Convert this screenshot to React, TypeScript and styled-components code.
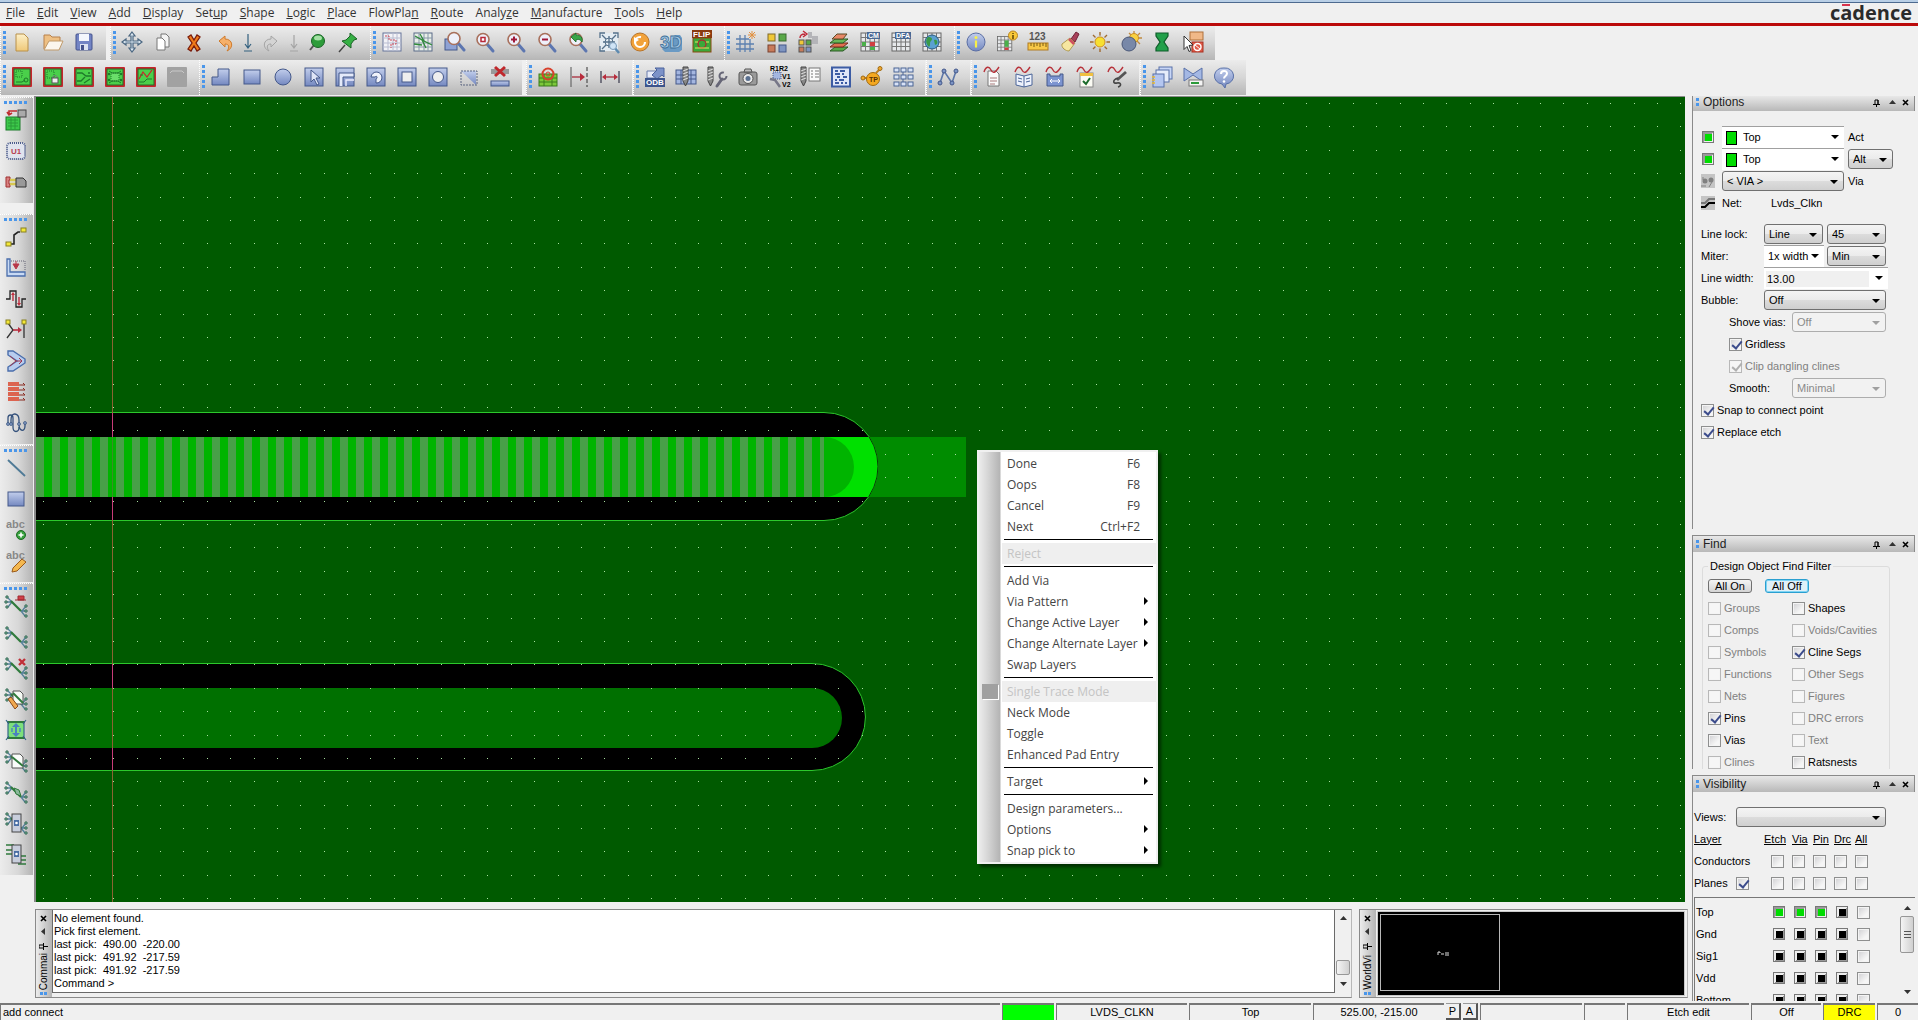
import React from 'react';
import styled, { createGlobalStyle, css } from 'styled-components';

const UI = '"Liberation Sans", Arial, sans-serif';
const SEGOE = '"Open Sans", "Noto Sans", sans-serif';

const Global = createGlobalStyle`
  * { box-sizing: border-box; }
  html, body { margin: 0; height: 100%; overflow: hidden; background: #f0f0f0; }
  body { font: 11px/13px ${UI}; color: #000; }
  button, input, select, textarea { font: inherit; color: inherit; margin: 0; padding: 0; border: 0; background: none; }
`;

/* ---------- icons ---------- */

const NAVY = '#44588a';
const TRACK = '#1e7a2a';

const Mag = ({ children }: { children?: React.ReactNode }) => (
  <>
    <path d="M14 14l6 7" stroke="#5c76b0" strokeWidth="3" strokeLinecap="round" />
    <circle cx="10" cy="9.500" r="6" fill="#eef0fa" stroke="#a8705c" strokeWidth="1.600" />
    {children}
  </>
);
const Board = ({ children }: { children?: React.ReactNode }) => (
  <>
    <rect x="2" y="2" width="20" height="20" rx="1" fill="#c8242c" />
    <rect x="4" y="4" width="16" height="16" fill="#4ad04a" stroke="#2a6a2c" />
    {children}
  </>
);
const BlueSquare = ({ children }: { children?: React.ReactNode }) => (
  <>
    <rect x="3" y="3" width="18" height="18" fill="url(#steel)" stroke={NAVY} />
    {children}
  </>
);
const Table = ({ children }: { children?: React.ReactNode }) => (
  <>
    <rect x="3" y="3" width="18" height="18" fill="#e6e8ea" stroke="#666" />
    <path d="M3 7.500h18M3 12h18M3 16.500h18M7.500 3v18M12 3v18M16.500 3v18" stroke="#777" />
    {children}
  </>
);
const Wave = ({ children }: { children?: React.ReactNode }) => (
  <>
    {children}
    <path d="M3 7c2-6 5-6 7-2s4 3 8-3" fill="none" stroke="#b8323a" strokeWidth="1.400" />
  </>
);
const Page = () => <path d="M7 6h8l3 3v12H7z" fill="#fafafa" stroke="#777" />;
const Drill = ({ x = 5 }: { x?: number }) => (
  <g>
    <path d={`M${x} 2h5v14l-2.500 5l-2.500-5z`} fill="#888" stroke="#444" />
    <path d={`M${x} 6l5-2M${x} 9l5-2M${x} 12l5-2M${x} 15l5-2`} stroke="#ddd" />
  </g>
);
const Wrench = () => (
  <path d="M12 21l5-7" stroke="#667" strokeWidth="3" strokeLinecap="round" />
);
const Rats = ({ children }: { children?: React.ReactNode }) => (
  <>
    <path d="M3 3l5 5M2 8h6M4 13l4-5M22 12l-4 5M22 17h-5M21 22l-4-5" stroke="#55809a" strokeWidth="1.300" fill="none" />
    <path d="M7 7l10 10" stroke="#2f7a3c" strokeWidth="2.200" />
    {[[3, 3], [2, 8], [3, 13], [22, 12], [22, 17], [22, 22]].map(([x, y]) => (
      <circle key={`${x}-${y}`} cx={x} cy={y} r="1.300" fill="#6aa88a" stroke="#2a5a4a" strokeWidth="0.700" />
    ))}
    {children}
  </>
);
const IconText = styled.text`
  font-family: ${UI};
  font-weight: 700;
`;

const icons: Record<string, React.ReactNode> = {
  new: <path d="M6 4h8l4 4v13H6z" fill="url(#sand)" stroke="#b8904a" />,
  open: <><path d="M3 19V5h6l2 2h8v4" fill="#eec084" stroke="#b8804a" /><path d="M3 20l5-9h14l-4 9z" fill="#fbf6ee" stroke="#c09a6a" /></>,
  save: <><rect x="4" y="4" width="16" height="16" rx="1" fill="#7384c4" stroke="#45528c" /><rect x="7" y="4" width="10" height="7" fill="#f4f6fc" /><rect x="8" y="14" width="8" height="6" fill="#dde2f0" /><rect x="9" y="15" width="3" height="5" fill="#45528c" /></>,
  move: <path d="M12 2l3 4h-2v5h5V9l4 3-4 3v-2h-5v5h2l-3 4-3-4h2v-5H6v2l-4-3 4-3v2h5V6H9z" fill="#dce8f2" stroke="#4a6680" strokeWidth="1.200" />,
  copy: <><path d="M10 4h5l3 3v10h-8z" fill="#f4f4f4" stroke="#777" /><path d="M6 8h5l3 3v9H6z" fill="#fff" stroke="#777" /></>,
  del: <path d="M6 7l3-2 3 5 3-5 3 2-4 6 4 6-3 2-3-5-3 5-3-2 4-6z" fill="#f07a1a" stroke="#7a1c0c" strokeWidth="1.300" />,
  undo: <path d="M6 11l6-5v3c8 0 9 9 2 12 3-4 2-7-2-7v3z" fill="#f6b06a" stroke="#d07a2a" />,
  down: <path d="M12 4v14M9 14l3 4 3-4M8 21h8" fill="none" stroke="#33607f" strokeWidth="1.200" />,
  redo: <path d="M18 11l-6-5v3c-8 0-9 9-2 12-3-4-2-7 2-7v3z" fill="#d4d4d4" stroke="#a4a4a4" />,
  downOff: <path d="M12 5v13M9 14l3 4 3-4M8 21h8" fill="none" stroke="#a4a4a4" strokeWidth="1.200" />,
  ball: <><path d="M9 15l-4 5" stroke="#555" strokeWidth="2" /><circle cx="13" cy="11" r="6.500" fill="#2d9c3a" stroke="#1a6426" /><ellipse cx="13" cy="8" rx="4" ry="2.500" fill="#a4e0a4" /></>,
  pin: <><path d="M9 15l-6 7" stroke="#444" strokeWidth="1.400" /><path d="M14 3l7 6-3 1-3 4v4L6 11l4-1 4-4z" fill="#36b044" stroke="#1a6426" /></>,
  gridRed: <><rect x="3" y="3" width="18" height="18" fill="#f2f2f6" stroke="#66759a" /><path d="M8 3v18M13 3v18M17 3v18M3 8h18M3 13h18M3 17h18" stroke="#b8bcd0" /><path d="M5 6h4v4h7v4h-5v4" fill="none" stroke="#c84858" strokeDasharray="2 1" /></>,
  gridGreen: <><rect x="3" y="3" width="18" height="18" fill="#e8eee8" stroke="#5a6a88" /><path d="M8 3v18M13 3v18M17 3v18M3 8h18M3 13h18M3 17h18" stroke="#8898a8" /><path d="M4 6l7 4 4 8M9 4l4 7 8 4M3 14l8 1" fill="none" stroke="#2f8a3a" strokeWidth="1.300" /></>,
  magWin: <><rect x="3" y="9" width="12" height="11" fill="#8fa2d4" stroke={NAVY} /><g transform="translate(2 -1)"><Mag /></g></>,
  magFit: <Mag><rect x="8" y="7.500" width="4" height="4" fill="#fff" stroke="#b82838" strokeWidth="1.500" /></Mag>,
  magIn: <Mag><path d="M7 9.500h6M10 6.500v6" stroke="#a01838" strokeWidth="2" /></Mag>,
  magOut: <Mag><path d="M7 9.500h6" stroke="#a01838" strokeWidth="2" /></Mag>,
  magPrev: <Mag><path d="M5 7l5-4v2c5 0 7 3 6 7-2-3-4-3-6-2v2z" fill="#3aa648" stroke="#1a6426" strokeWidth="0.800" /></Mag>,
  magSel: <><path d="M3 3h18v18H3z" fill="#e4ecf2" /><path d="M3 8V3h5M16 3h5v5M3 16v5h5M5 5l4 4M19 5l-4 4M5 19l4-4M12 6v12M6 12h12" stroke="#54708a" strokeWidth="1.300" fill="none" /><circle cx="12" cy="12" r="4" fill="none" stroke="#54708a" /><path d="M17 17l5 6" stroke="#5c8ab0" strokeWidth="2.500" /><circle cx="16" cy="16" r="3.500" fill="#cfe4f6" stroke="#7a9ab8" /></>,
  refresh: <><circle cx="12" cy="12" r="9" fill="#f2a23a" stroke="#b8742a" /><circle cx="12" cy="12" r="5" fill="none" stroke="#fff" strokeWidth="2.200" strokeDasharray="24 7" /><path d="M6 13V7l5 3z" fill="#fff" /></>,
  three: <><path d="M16 5h5l2 3v12l-3 2-14 0-3-3z" fill="#6a9ac4" /><IconText x="1" y="18" fontSize="17" fill="#a4c8e6" stroke="#3f7098" strokeWidth="0.800">3D</IconText></>,
  flip: <><rect x="3" y="8" width="18" height="14" fill="#3aa83a" stroke="#8a4a12" /><circle cx="12" cy="14" r="4" fill="none" stroke="#a83030" strokeWidth="1.400" /><path d="M5 18h14M5 12h3M16 12h3" stroke="#e0e860" /><rect x="2" y="0" width="20" height="8" fill="#8a3a10" /><IconText x="3" y="7" fontSize="8" fill="#fff">FLIP</IconText></>,
  gridStar: <><path d="M6 5v17M11 5v17M16 9v13M2 9h13M2 14h18M2 19h18" stroke="#5c80b0" strokeWidth="1.300" /><path d="M18 1v8M14 5h8M15 2l6 6M21 2l-6 6" stroke="#e09040" /></>,
  four: <><rect x="3" y="4" width="7" height="7" fill="#f0c838" stroke="#806a2a" /><rect x="14" y="4" width="7" height="7" fill="#5aa848" stroke="#3a6a30" /><rect x="3" y="15" width="7" height="7" fill="#c87a5a" stroke="#7a4230" /><rect x="14" y="15" width="7" height="7" fill="#7e94c0" stroke={NAVY} /></>,
  fourMove: <><path d="M12 2h4v4h6v8h-6V8h-4z" fill="#b4b4b8" /><rect x="3" y="10" width="5" height="5" fill="#f0c838" stroke="#555" /><rect x="10" y="10" width="5" height="5" fill="#5aa848" stroke="#555" /><rect x="3" y="17" width="5" height="5" fill="#c87a5a" stroke="#555" /><rect x="10" y="17" width="5" height="5" fill="#7e94c0" stroke="#555" /><path d="M4 8c0-3 2-4 5-4M7 1l4 3-4 3" fill="none" stroke="#c02838" strokeWidth="1.400" /></>,
  layers: <><path d="M3 21l5-4h13l-5 4z" fill="#58a848" stroke="#2a5a24" /><path d="M3 17l5-4h13l-5 4z" fill="#e07050" stroke="#7a2a1c" /><path d="M3 13l5-4h13l-5 4z" fill="#68b858" stroke="#2a5a24" /><path d="M5 9l5-5h10l-4 5z" fill="#e88868" stroke="#5a4a24" /></>,
  cm: <Table><rect x="9" y="2" width="13" height="7" fill="#4a6894" /><IconText x="10" y="8" fontSize="7" fill="#fff">CM</IconText><rect x="4" y="12" width="4" height="4" fill="#4ab04a" /><rect x="12" y="12" width="5" height="4" fill="#d04040" /><rect x="12" y="17" width="5" height="3" fill="#4ab04a" /></Table>,
  dfa: <Table><rect x="6" y="2" width="16" height="7" fill="#4a6894" /><IconText x="7" y="8" fontSize="7" fill="#fff">DFA</IconText></Table>,
  globe: <Table><circle cx="12" cy="12" r="7" fill="#5aa0d0" stroke="#2a5a80" /><path d="M8 7c4 0 5 2 3 4s0 4-2 6c-3-3-4-7-1-10zM14 10c3-1 4 2 3 4l-2 1z" fill="#3a9a48" /></Table>,
  info: <><circle cx="12" cy="12" r="9" fill="url(#steel)" stroke="#5a6ea4" /><circle cx="12" cy="7.500" r="1.500" fill="#f8f048" /><path d="M12 10.500v7" stroke="#f8f048" strokeWidth="2.200" /></>,
  tableInfo: <><g transform="translate(0 4) scale(0.800)"><Table><rect x="12" y="8" width="5" height="8" fill="#4ab04a" /><rect x="12" y="17" width="5" height="3" fill="#d04040" /></Table></g><circle cx="18" cy="5.500" r="4.500" fill="#f8c838" stroke="#b88420" /><path d="M18 3v1M18 5v4" stroke="#553a00" strokeWidth="1.400" /></>,
  ruler: <><IconText x="3" y="10" fontSize="10" fill="#555">123</IconText><rect x="2" y="13" width="20" height="7" fill="#f8c848" stroke="#b07a20" /><path d="M5 13v3M8 13v4M11 13v3M14 13v4M17 13v3M20 13v4" stroke="#7a5a10" /></>,
  brush: <><path d="M14 9l5-7 3 2-4 8z" fill="#a8405a" stroke="#702438" /><path d="M5 14l8-6 5 5-6 8c-3 0-8-3-7-7z" fill="#f6e6a0" stroke="#b09a50" /><path d="M12 9l5 5" stroke="#d05060" strokeWidth="2.500" /></>,
  sun: <><path d="M12 2v20M2 12h20M5 5l14 14M19 5L5 19" stroke="#a06a30" strokeWidth="1.400" /><circle cx="12" cy="12" r="6.500" fill="#d8d8d8" /><circle cx="12" cy="12" r="5" fill="#f8e030" stroke="#d09020" /></>,
  moon: <><path d="M15 1v14M8 8h15M10 3l11 11M21 3l-8 8" stroke="#c08a40" strokeWidth="1.300" /><circle cx="15" cy="8" r="4.500" fill="#f8d040" stroke="#d09020" /><circle cx="10" cy="14" r="7" fill="#7888a8" stroke="#4a5878" /></>,
  glass: <path d="M6 3h12v3l-4 6 4 6v3H6v-3l4-6-4-6z" fill="#22a04a" stroke="#0f5c2a" strokeWidth="1.200" />,
  noPick: <><rect x="9" y="2" width="13" height="8" fill="#f0b888" stroke="#b0703a" /><rect x="11" y="12" width="11" height="10" fill="#e05a48" stroke="#a83020" /><circle cx="16.500" cy="17" r="3.500" fill="none" stroke="#fff" strokeWidth="1.400" /><path d="M14 15l5 4" stroke="#fff" /><path d="M3 6l9 9-4 .5 2 5-2 1-2-5-3 3z" fill="#fff" stroke="#333" /></>,

  b1: <Board><rect x="6" y="6" width="6" height="6" fill="none" stroke={TRACK} strokeDasharray="1 1" /><path d="M6 17h6l3-2" stroke={TRACK} fill="none" /><circle cx="16" cy="15" r="2" fill="none" stroke={TRACK} /></Board>,
  b2: <Board><rect x="6" y="6" width="7" height="7" fill="none" stroke={TRACK} strokeDasharray="1 1" /><path d="M12 13v-1c0-2 4-2 4 0v1" fill="none" stroke="#777" /><rect x="11" y="13" width="6" height="5" fill="#f0f0f0" stroke="#555" /></Board>,
  b3: <Board><path d="M5 8h5l4 3h5M5 16h4l4-4M12 18l6-4" stroke={TRACK} strokeWidth="1.300" fill="none" /><circle cx="17" cy="8" r="1" fill={TRACK} /></Board>,
  b4: <Board><path d="M8 8h8v8H8z" fill="#6ade6a" stroke={TRACK} strokeDasharray="1 1" /><path d="M6 6l3 2h6l3-2M6 18l3-2h6l3 2" stroke={TRACK} fill="none" />{[[6, 9], [18, 9], [6, 15], [18, 15]].map(([x, y]) => <circle key={`${x}${y}`} cx={x} cy={y} r="1.200" fill={TRACK} />)}</Board>,
  b5: <Board><path d="M5 14l4-7 4 5 5-7" stroke="#c8242c" strokeWidth="1.200" fill="none" /><path d="M5 17h5l3-3h5M6 10h3" stroke={TRACK} fill="none" /></Board>,
  b6: <><rect x="2" y="2" width="20" height="20" rx="1" fill="#a2a2a2" /><path d="M5 8l2-2h10l2 2" stroke="#c8c8c8" fill="none" /></>,
  poly: <path d="M3 12h6V4h11v16H3z" fill="url(#steel)" stroke={NAVY} />,
  rect: <rect x="4" y="5" width="16" height="14" fill="url(#steel)" stroke={NAVY} />,
  oval: <circle cx="12" cy="12" r="8" fill="url(#steel)" stroke={NAVY} />,
  pick: <BlueSquare><path d="M9 5v12l3-3 3 6 2-1-3-6h4z" fill="#dfe5f6" stroke={NAVY} /></BlueSquare>,
  nest: <BlueSquare><path d="M6 21V8h15v4H10v9" fill="#e4eafa" stroke={NAVY} /><path d="M13 21v-6h8" fill="none" stroke="#eef" strokeWidth="1.400" /></BlueSquare>,
  pie: <BlueSquare><path d="M7 12a5.500 5.500 0 1 1 5 6v-4c2-1 1-4-1-2z" fill="#f0f2fa" stroke={NAVY} /></BlueSquare>,
  hollow: <BlueSquare><rect x="7" y="7" width="10" height="10" fill="#eee" stroke={NAVY} /></BlueSquare>,
  circ: <BlueSquare><circle cx="12" cy="12" r="5.500" fill="#eee" stroke={NAVY} /></BlueSquare>,
  diag: <><path d="M4 6l15 14V6z" fill="url(#steel)" /><path d="M4 6h16v14H4z" fill="none" stroke="#5a6480" strokeDasharray="2 1" /></>,
  delShape: <><rect x="3" y="4" width="18" height="5" fill="#999" /><path d="M7 2l10 9M17 2L7 11" stroke="#c0282c" strokeWidth="3" /><rect x="3" y="16" width="18" height="5" fill="url(#steel)" stroke={NAVY} /></>,
  icRing: <><rect x="3" y="9" width="18" height="12" fill="#7cc83a" stroke="#3a7a1c" /><path d="M3 13h18M3 17h18M8 9v12M16 9v12" stroke="#3a7a1c" /><circle cx="12" cy="9" r="5.500" fill="none" stroke="#d8402c" strokeWidth="2" /><circle cx="12" cy="9" r="2" fill="none" stroke="#d8402c" /></>,
  dimTo: <><path d="M4 2v20" stroke="#555" /><path d="M20 2v20" stroke="#333" strokeDasharray="4 2" /><path d="M5 12h10" stroke="#a82c3c" strokeWidth="1.300" /><path d="M13 8l5 4-5 4z" fill="#b82c3c" /></>,
  dim: <><path d="M3 6v12M21 6v12" stroke="#445" strokeWidth="1.300" /><path d="M6 12h12" stroke="#a82c3c" strokeWidth="1.300" /><path d="M4 12l4-3v6zM20 12l-4-3v6z" fill="#b82c3c" /></>,
  odb: <><path d="M4 6h10v7H4z" fill="#e8ecf8" stroke="#6a7cac" /><path d="M9 10l5-5-2-2h9v9l-2-2-5 4z" fill="#7c92c8" stroke="#4a629c" /><rect x="2" y="13" width="20" height="9" fill="#3c548c" /><IconText x="3" y="20" fontSize="8" fill="#fff">ODB</IconText></>,
  drillTable: <><rect x="2" y="5" width="20" height="14" fill="#a4b6e0" stroke={NAVY} /><path d="M2 10h20M2 14h20M7 5v14M17 5v14" stroke={NAVY} /><Drill x={9} /></>,
  drillWrench: <><Drill x={3} /><Wrench /><circle cx="18" cy="11" r="3.500" fill="none" stroke="#667" strokeWidth="2" strokeDasharray="17 5" /></>,
  camera: <><rect x="3" y="7" width="18" height="13" rx="2" fill="#9a9a9a" stroke="#555" /><path d="M8 7l1-3h6l1 3z" fill="#bbb" stroke="#555" /><circle cx="12" cy="13.500" r="5" fill="#e8e8e8" stroke="#555" /><circle cx="12" cy="13.500" r="2.500" fill="#5a7090" /></>,
  r1r2: <><IconText x="3" y="6" fontSize="7">R1R2</IconText><IconText x="15" y="14" fontSize="7">V1</IconText><IconText x="15" y="22" fontSize="7">V2</IconText><rect x="6" y="7" width="8" height="7" fill="#a4b6e0" stroke={NAVY} strokeDasharray="1 1" /><path d="M3 14l5 1 5 7" stroke="#778" strokeWidth="2.500" fill="none" /></>,
  drillList: <><Drill x={3} /><rect x="11" y="3" width="11" height="13" fill="#fafafa" stroke="#777" /><path d="M13 6h2M17 6h4M13 9h2M17 9h4M13 12h2M17 12h4" stroke="#777" /></>,
  matrix: <><rect x="3" y="2.500" width="18" height="19" fill="#dfe6f8" stroke="#3c5ca4" strokeWidth="2" /><path d="M6 6h3M11 6h5M6 9h5M13 9h2M8 12h3M14 12h4M6 15h2M10 15h5M6 18h4M12 18h2M16 18h2" stroke="#3c5ca4" strokeWidth="2" /></>,
  tp: <><path d="M2 13h6M16 8l4-4" stroke="#c08020" strokeWidth="2" /><circle cx="3" cy="13" r="2" fill="#f0a830" stroke="#a06a10" /><circle cx="20" cy="3.500" r="2" fill="#f0a830" stroke="#a06a10" /><circle cx="13" cy="14" r="6.500" fill="#f4a820" stroke="#a06a10" /><IconText x="9" y="17" fontSize="7" fill="#5a3000">TP</IconText></>,
  nine: <>{[3, 10, 17].map(y => [3, 10, 17].map(x => <rect key={`${x}${y}`} x={x} y={y} width="5" height="4" fill="#d8e2f6" stroke="#4a6494" />))}<path d="M12 7v3M12 14v3" stroke="#4a6494" /></>,
  net: <><path d="M4 18L8 6l8 12 4-12" fill="none" stroke="#5c76a8" strokeWidth="1.600" />{[[4, 18], [8, 6], [16, 18], [20, 6]].map(([x, y]) => <circle key={x} cx={x} cy={y} r="2" fill="#7c94c4" stroke={NAVY} />)}</>,
  w1: <Wave><Page /><path d="M9 13h7M9 16h7M9 19h5" stroke="#a87a7a" /></Wave>,
  w2: <Wave><path d="M4 9l8 2 8-2v11l-8 2-8-2z" fill="#eef2fc" stroke="#4a6498" /><path d="M12 11v11M6 13l4 1M6 16l4 1M18 13l-4 1M18 16l-4 1" stroke="#4a6498" /></Wave>,
  w3: <Wave><path d="M4 9h3v2h10V9h3v12H4z" fill="#7c94d0" stroke={NAVY} /><path d="M7 16h10M9 14l-2 2 2 2M15 14l2 2-2 2" stroke="#fff" fill="none" /></Wave>,
  w4: <Wave><rect x="6" y="8" width="13" height="14" fill="#fbfbf4" stroke="#888" /><rect x="6" y="8" width="13" height="3" fill="#f0c040" /><path d="M9 16l3 3 4-6" fill="none" stroke="#1a6a2a" strokeWidth="2" /></Wave>,
  w5: <Wave><path d="M21 7l-9 8" fill="none" stroke="#555" strokeWidth="2.800" /><path d="M13 13c-6 2-5 6-1 5s5 3 1 4" fill="none" stroke="#444" strokeWidth="1.600" /></Wave>,
  windows: <><rect x="9" y="2" width="13" height="12" fill="#c8d6f6" stroke="#5870a8" /><rect x="6" y="5" width="13" height="12" fill="#e6ecfa" stroke="#5870a8" /><rect x="3" y="9" width="11" height="13" fill="#b4c6f0" stroke="#5870a8" /><path d="M2 12h3M2 15h3M2 18h3" stroke="#e8b830" strokeWidth="1.600" /></>,
  bow: <><path d="M3 3l9 6 9-6v13l-9-6-9 6z" fill="#a4b8e4" stroke="#5870a8" /><rect x="8" y="15" width="14" height="6" fill="#f4f4f4" stroke="#777" /><path d="M10 18h8" stroke="#2a9a3a" strokeWidth="2" /></>,
  help: <><path d="M12 3a8.500 8 0 0 1 2 16l-1 4-3-4A8.500 8 0 0 1 12 3z" fill="url(#steel)" stroke="#5870a8" /><path d="M9 9c0-4 6-4 6-.5 0 2.500-3 2.500-3 5" fill="none" stroke="#fff" strokeWidth="2" /><circle cx="12" cy="16.500" r="1.300" fill="#fff" /></>,

  place: <><rect x="2" y="9" width="14" height="13" fill="#3cc84a" stroke="#1a7a28" /><path d="M4 12h10M4 15h10M4 18h10M7 10v11M11 10v11" stroke="#2a9a38" /><rect x="14" y="2" width="8" height="7" fill="#aaa" stroke="#444" /><path d="M13 3H5v4M3 4l2 3 3-2" stroke="#c02c30" strokeWidth="1.600" fill="none" /></>,
  u1: <><rect x="3" y="4" width="18" height="16" rx="3" fill="#e0e4ee" stroke="#4c5c8c" strokeWidth="2" strokeDasharray="1 1" /><IconText x="7" y="15" fontSize="8" fill="#b84050">U1</IconText></>,
  conn: <><path d="M2 7h4v3H5v4h1v3H2z" fill="#d88080" stroke="#a03030" /><path d="M6 10h7M6 14h7" stroke="#d8c850" strokeWidth="2.400" /><path d="M12 8h7l3 3v6H12z" fill="#999" stroke="#333" /></>,
  route: <><path d="M5 19h5v-9l4-3h2" fill="none" stroke="#222" strokeWidth="1.600" /><rect x="2" y="17" width="5" height="4" fill="#f4e838" stroke="#888020" /><rect x="17" y="3" width="5" height="4" fill="#f4e838" stroke="#888020" /></>,
  slide: <><path d="M3 3h3v13h15v4H3z" fill="#c8daf4" stroke="#4a6eac" strokeWidth="1.300" /><path d="M7 5h14v9" fill="none" stroke="#667" strokeDasharray="1 1" /><path d="M12 5v4M9 8h6l-3 5z" fill="#b83848" stroke="#b83848" /></>,
  tune: <><path d="M2 12h4V4h6v16h6v-8h4" fill="none" stroke="#222" strokeWidth="1.300" /><path d="M9 14V8M15 10v6" stroke="#c03040" strokeWidth="1.400" /><path d="M7 8l2-3 2 3zM13 16l2 3 2-3z" fill="#c03040" /></>,
  vertex: <><path d="M4 5l5 7-6 8M20 5v15" stroke="#333" strokeWidth="1.300" fill="none" /><path d="M9 12h6" stroke="#b83040" strokeWidth="1.600" /><path d="M14 9l4 3-4 3z" fill="#b83040" /><rect x="2" y="2" width="4" height="4" fill="#f4e838" stroke="#888020" /><rect x="18" y="2" width="4" height="4" fill="#f4e838" stroke="#888020" /></>,
  smooth: <><path d="M4 2h5l12 8v4l-12 8H4v-4l9-6-9-6z" fill="#b8ccee" stroke="#4a6eac" strokeWidth="1.400" /><path d="M6 7l6 5-6 5M12 12h6M15 9l3 3-3 3" stroke="#a03850" fill="none" /></>,
  fan: <><path d="M4 4h11M4 9h11M4 14h11M4 19h11" stroke="#dc6450" strokeWidth="4" /><path d="M15 5h6M15 10h6M15 15h6M15 20h6M19 3l2 2M19 8l2 2M19 13l2 2M19 18l2 2" stroke="#8a2a20" /></>,
  meander: <><path d="M4 13V7c0-4 5-4 5 0v9c0 6 6 6 6 0" fill="none" stroke="#35527c" strokeWidth="1.300" /><path d="M7 13V9c0-9 8-7 8 0v4c0 8 6 8 6 2v-4" fill="none" stroke="#35527c" strokeWidth="1.300" />{[[4, 13], [7, 13], [15, 13], [21, 12]].map(([x, y]) => <circle key={x} cx={x} cy={y} r="1.500" fill="#8098c0" stroke="#35527c" strokeWidth="0.700" />)}</>,
  line: <path d="M4 4l17 16" stroke="#4f7a96" strokeWidth="1.800" />,
  abcAdd: <><IconText x="2" y="10" fontSize="11" fill="#888">abc</IconText><circle cx="17" cy="17" r="4.500" fill="#36a03c" stroke="#1c6a24" /><path d="M14.500 17h5M17 14.500v5" stroke="#fff" strokeWidth="1.600" /></>,
  abcEdit: <><IconText x="2" y="10" fontSize="11" fill="#888">abc</IconText><path d="M9 19l9-9 4 3-9 9-5 1z" fill="#f4b850" stroke="#9a5a1a" /></>,
  rats1: <Rats><path d="M11 6h11M14 2h6v4h-6z" stroke="#a02830" fill="#d04048" /></Rats>,
  rats2: <Rats />,
  rats3: <Rats><path d="M15 3l6 6M21 3l-6 6" stroke="#c03038" strokeWidth="2.400" /></Rats>,
  rats4: <Rats><path d="M9 4h7l3 3v10h-10z" fill="#f6faf4" stroke="#555" /><path d="M9 6l10 10" stroke="#2f7a3c" strokeWidth="2" /><path d="M4 12l3-2 7 9-3 3z" fill="#f0a850" stroke="#8a4a1a" /></Rats>,
  rats5: <><rect x="4" y="4" width="16" height="16" fill="#7ce07c" /><path d="M3 4h18M3 20h18" stroke="#2f7a3c" strokeWidth="2" /><path d="M2 2l3 4M22 2l-3 4M2 22l3-4M22 22l-3-4M4 5v14M20 5v14" stroke="#35648a" strokeWidth="1.200" /><path d="M12 5l4 4H8zM12 19l4-4H8z" fill="#4a80c0" /><path d="M12 8v8" stroke="#4a80c0" strokeWidth="2" /><path d="M8 10v4M16 10v4" stroke="#4a80c0" strokeWidth="1.400" /></>,
  rats6: <Rats><path d="M8 5h8l3 3v11H8z" fill="#fafcfa" stroke="#555" /><path d="M8 8l11 9" stroke="#2f7a3c" strokeWidth="2" /></Rats>,
  rats7: <Rats><path d="M10 8l5 2 2 6-5-2z" fill="#8ab89a" stroke="#2f7a3c" /></Rats>,
  rats8: <Rats><rect x="8" y="3" width="9" height="18" fill="#c8cedc" stroke="#444" /><rect x="10" y="9" width="5" height="6" fill="#4a6ea4" /><circle cx="12.500" cy="12" r="1.300" fill="#fff" /></Rats>,
  rats9: <><path d="M2 3h8M2 8h8M2 12h6M14 14h8M14 18h8M14 22h8" stroke="#2f7a3c" strokeWidth="1.400" /><rect x="8" y="3" width="9" height="18" fill="#c8cedc" stroke="#444" /><rect x="10" y="9" width="5" height="6" fill="#4a6ea4" /><circle cx="12.500" cy="12" r="1.300" fill="#fff" /></>,
};

/* ---------- frame ---------- */

const Shell = styled.div`
  height: 100vh;
  display: flex;
  flex-direction: column;
  background: #f0f0f0;
`;
const TitleEdge = styled.div`
  height: 3px;
  flex: none;
  background: #b9cfe6;
  border-bottom: 1px solid #4d6a8f;
`;
const MenuBar = styled.nav`
  height: 23px;
  flex: none;
  display: flex;
  align-items: center;
  padding: 0 6px;
  gap: 12px;
  border-bottom: 3px solid #bb0a0a;
  font: 12px/16px ${SEGOE};
  color: #333;
`;
const MenuItem = styled.button`
  white-space: nowrap;
`;
const Brand = styled.div`
  position: relative;
  margin-left: auto;
  font: 700 20px/20px ${SEGOE};
  color: #2b2b2b;
  &::after {
    content: '';
    position: absolute;
    left: 12px;
    top: 1px;
    width: 8px;
    height: 2px;
    background: #d8344c;
  }
`;
const HiddenDefs = styled.svg`
  position: absolute;
  width: 0;
  height: 0;
`;

const ToolRow = styled.div<{ $h: number }>`
  height: ${p => p.$h}px;
  flex: none;
  display: flex;
`;
const ToolGroup = styled.div<{ $vertical?: boolean; $gap?: number }>`
  display: flex;
  flex: none;
  align-items: center;
  ${p => p.$vertical ? css`
    flex-direction: column;
    width: 33px;
    padding: 3px 2px 6px 0;
    margin-bottom: ${p.$gap ?? 0}px;
    border-top: 1px dotted #fff;
    background: linear-gradient(90deg, #ececec, #d8d8d8 55%, #b4b4b4);
  ` : css`
    padding: 0 7px 2px 2px;
    margin-right: ${p.$gap ?? 0}px;
    border-left: 1px dotted #fff;
    background: linear-gradient(#ececec, #d6d6d6 50%, #b6b6b6);
  `}
`;
const Grip = styled.span<{ $vertical?: boolean }>`
  flex: none;
  width: ${p => (p.$vertical ? 23 : 3)}px;
  height: ${p => (p.$vertical ? 3 : 23)}px;
  background: repeating-linear-gradient(${p => (p.$vertical ? '90deg' : '180deg')}, #4a96ea 0 3px, transparent 3px 5px);
`;
const ToolButton = styled.button<{ $narrow?: boolean }>`
  width: ${p => (p.$narrow ? 15 : 31)}px;
  height: 31px;
  flex: none;
  display: flex;
  align-items: center;
  justify-content: center;
`;
const Glyph = styled.svg`
  width: 24px;
  height: 24px;
  flex: none;
`;

function Tools({ names, vertical, gap }: { names: string; vertical?: boolean; gap?: number }) {
  return (
    <ToolGroup $vertical={vertical} $gap={gap}>
      <Grip $vertical={vertical} />
      {names.split(' ').map(n => (
        <ToolButton key={n} aria-label={n} $narrow={n.startsWith('down')}>
          <Glyph viewBox="0 0 24 24">{icons[n]}</Glyph>
        </ToolButton>
      ))}
    </ToolGroup>
  );
}

const Main = styled.main`
  flex: 1;
  min-height: 0;
  display: flex;
`;
const SideTools = styled.aside`
  width: 34px;
  flex: none;
  padding-top: 2px;
`;
const Center = styled.section`
  flex: 1;
  min-width: 0;
  display: flex;
  flex-direction: column;
  gap: 7px;
  padding: 1px 0 5px;
`;
const Workspace = styled.div`
  position: relative;
  flex: 1;
  min-height: 0;
  margin-right: 7px;
  overflow: hidden;
  border-top: 1px solid #8a8a8a;
  border-left: 2px solid #8a8a8a;
  background: #005a00;
`;
const Drawing = styled.svg`
  display: block;
  width: 100%;
  height: 100%;
`;

const STEP = 23.39;
const dots = Array.from({ length: 60 }, (_, r) =>
  Array.from({ length: 110 }, (_, c) => `M${Math.round(7 + c * STEP)} ${Math.round(6 + r * STEP)}h1v1h-1z`).join('')
).join('');

function Board2D() {
  return (
    <Drawing>
      <defs>
        <pattern id="stripes" width="16" height="60" patternUnits="userSpaceOnUse">
          <rect width="16" height="60" fill="#00b400" />
          <rect width="8" height="60" fill="#48a048" />
        </pattern>
        <clipPath id="band"><rect y="340" width="860" height="60" /></clipPath>
      </defs>
      <rect x="788" y="340" width="142" height="60" fill="#008c00" />
      <path d="M-5 315.500H788a54 54 0 0 1 0 108H-5z" fill="#000" stroke="#2cc82c" />
      <path d="M-5 566.500H776a53.500 53.500 0 0 1 0 107H-5z" fill="#000" stroke="#2cc82c" />
      <path d="M-5 591H776a30 30 0 0 1 0 60H-5z" fill="#007000" />
      <path d={dots} fill="#a8e0a0" shapeRendering="crispEdges" />
      <path d="M76.500 0V2000" stroke="#8a6432" />
      <path d="M76.500 316V340M76.500 400V423M76.500 567V591M76.500 651V673" stroke="#c83c78" />
      <g clipPath="url(#band)">
        <circle cx="788" cy="369.500" r="54" fill="#00e000" />
        <path d="M788 315.500a54 54 0 0 1 0 108" fill="none" stroke="#064006" />
      </g>
      <path d="M0 340H788a30 30 0 0 1 0 60H0z" fill="#00b400" />
      <rect y="340" width="788" height="60" fill="url(#stripes)" />
      <path d="M76.500 340V400" stroke="#3c8c28" />
    </Drawing>
  );
}

/* ---------- context menu ---------- */

const Popup = styled.div`
  position: absolute;
  left: 941px;
  top: 353px;
  width: 181px;
  padding: 1px 2px 1px 1px;
  border: 2px solid #f0f0f0;
  background: linear-gradient(90deg, #ececec, #d8d8d8 8px, #b4b4b4 21px, #fff 22px);
  background-color: #fff;
  box-shadow: 3px 3px 3px rgba(0, 0, 0, 0.5);
  font: 12px/21px ${SEGOE};
  color: #444;
`;
const PopupItem = styled.button<{ $off?: boolean }>`
  position: relative;
  display: flex;
  align-items: center;
  justify-content: space-between;
  width: 154px;
  height: 21px;
  margin-left: 22px;
  padding: 0 16px 0 5px;
  white-space: nowrap;
  text-align: left;
  ${p => p.$off && css`background: #efefef; color: #c4c4c4;`}
`;
const PopupRule = styled.hr`
  height: 1px;
  margin: 2px 1px 3px 24px;
  border: 0;
  background: #000;
`;
const SubArrow = styled.i`
  position: absolute;
  right: 8px;
  top: 6px;
  border: 4px solid transparent;
  border-left-color: #000;
  border-right: 0;
`;
const CheckMark = styled.i`
  position: absolute;
  left: -20px;
  top: 3px;
  width: 16px;
  height: 15px;
  background: #a0a0a0;
  box-shadow: 1px 1px 0 #fff;
`;

type Entry = [label: string, extra?: string];
const popupGroups: Entry[][] = [
  [['Done', 'F6'], ['Oops', 'F8'], ['Cancel', 'F9'], ['Next', 'Ctrl+F2']],
  [['Reject', 'off']],
  [['Add Via'], ['Via Pattern', '>'], ['Change Active Layer', '>'], ['Change Alternate Layer', '>'], ['Swap Layers']],
  [['Single Trace Mode', 'checked'], ['Neck Mode'], ['Toggle'], ['Enhanced Pad Entry']],
  [['Target', '>']],
  [['Design parameters...'], ['Options', '>'], ['Snap pick to', '>']],
];

function ContextMenu() {
  return (
    <Popup role="menu">
      {popupGroups.map((group, i) => (
        <React.Fragment key={i}>
          {i > 0 && <PopupRule />}
          {group.map(([label, extra = '']) => {
            const off = extra === 'off' || extra === 'checked';
            return (
              <PopupItem key={label} role="menuitem" $off={off}>
                {extra === 'checked' && <CheckMark />}
                <span>{label}</span>
                {extra === '>' ? <SubArrow /> : !off && extra && <span>{extra}</span>}
              </PopupItem>
            );
          })}
        </React.Fragment>
      ))}
    </Popup>
  );
}

/* ---------- bottom docks ---------- */

const Docks = styled.div`
  height: 89px;
  flex: none;
  display: flex;
  gap: 7px;
  padding-left: 1px;
  margin-right: 4px;
`;
const Dock = styled.div<{ $w?: number }>`
  ${p => (p.$w ? `width: ${p.$w}px; flex: none;` : 'flex: 1; min-width: 0;')}
  display: flex;
  border: 1px solid #8a8a8a;
  border-right-color: #b8b8b8;
`;
const Strip = styled.div`
  width: 16px;
  flex: none;
  display: flex;
  flex-direction: column;
  align-items: center;
  padding: 3px 1px 2px 0;
  background: linear-gradient(90deg, #ececec, #b4b4b4);
  font: 10px/13px ${UI};
`;
const StripTitle = styled.span`
  margin: auto 0 2px;
  writing-mode: vertical-rl;
  transform: rotate(180deg);
  white-space: nowrap;
`;
const TwoDots = styled.i<{ $vertical?: boolean }>`
  flex: none;
  width: ${p => (p.$vertical ? 3 : 7)}px;
  height: ${p => (p.$vertical ? 8 : 3)}px;
  background: linear-gradient(${p => (p.$vertical ? '180deg' : '90deg')}, #4a96ea 3px, transparent 3px ${p => (p.$vertical ? 5 : 4)}px, #4a96ea ${p => (p.$vertical ? 5 : 4)}px);
`;
const TinyButton = styled.button<{ $h?: number }>`
  width: 13px;
  height: ${p => p.$h ?? 13}px;
  flex: none;
  display: flex;
  align-items: center;
  justify-content: center;
`;
const Tiny = styled.svg`
  width: 9px;
  height: 9px;
  flex: none;
`;
const Close = () => <Tiny viewBox="0 0 9 9"><path d="M2 2l5 5M7 2L2 7" stroke="#000" strokeWidth="1.600" /></Tiny>;
const Tri = ({ d }: { d: string }) => <Tiny viewBox="0 0 9 9"><path d={d} fill="#333" /></Tiny>;
const PinUp = () => <Tiny viewBox="0 0 9 9"><path d="M3 6V2h3v4M1 6.500h7M4.500 7v2M6 2v4" stroke="#000" fill="none" /></Tiny>;
const PinSide = () => <Tiny viewBox="0 0 9 9"><path d="M4 3H0v3h4M4.500 1v7M5 4.500h4" stroke="#000" fill="none" /></Tiny>;

const Log = styled.textarea`
  flex: 1;
  min-width: 0;
  height: 83px;
  resize: none;
  overflow: hidden;
  padding: 2px 1px;
  background: #fff;
  border: 1px solid #6a6a6a;
  border-top-width: 0;
  outline: 0;
  font: 11px/13px ${UI};
`;
const Scroll = styled.div<{ $h: number }>`
  width: 16px;
  flex: none;
  display: flex;
  flex-direction: column;
  align-items: center;
  background: #f0f0f0;
  height: ${p => p.$h}px;
`;
const Thumb = styled.span<{ $h: number; $push?: boolean }>`
  width: 14px;
  height: ${p => p.$h}px;
  margin-top: ${p => (p.$push ? 'auto' : 0)};
  margin-bottom: ${p => (p.$push ? 0 : 'auto')};
  display: flex;
  align-items: center;
  justify-content: center;
  border: 1px solid #979797;
  border-radius: 2px;
  background: linear-gradient(90deg, #f4f4f4, #d0d0d0);
`;
const Ridges = styled.i`
  width: 7px;
  height: 8px;
  background: repeating-linear-gradient(#555 0 1px, transparent 1px 3px);
`;
const WorldView = styled.svg`
  flex: 1;
  min-width: 0;
  margin: 1px 2px 1px 1px;
  border: 1px solid #c8c8c8;
  background: #000;
`;

function StripBar({ title }: { title: string }) {
  return (
    <Strip>
      <TinyButton aria-label={`Close ${title}`} $h={11}><Close /></TinyButton>
      <TinyButton aria-label={`Collapse ${title}`} $h={15}><Tri d="M6 1v7L2 4.500z" /></TinyButton>
      <TinyButton aria-label={`Pin ${title}`} $h={14}><PinSide /></TinyButton>
      <StripTitle>{title}</StripTitle>
      <TwoDots />
    </Strip>
  );
}

/* ---------- right panels ---------- */

const Panels = styled.aside`
  width: 226px;
  flex: none;
  display: flex;
  flex-direction: column;
  gap: 6px;
  padding: 1px 3px 2px 0;
`;
const Panel = styled.section<{ $h?: number }>`
  ${p => (p.$h ? `height: ${p.$h}px; flex: none;` : 'flex: 1; min-height: 0;')}
  overflow: hidden;
  display: flex;
  flex-direction: column;
  border-left: 1px solid #8a8a8a;
`;
const PanelHead = styled.header<{ $first?: boolean }>`
  height: ${p => (p.$first ? 15 : 17)}px;
  flex: none;
  display: flex;
  align-items: center;
  padding: ${p => (p.$first ? '0 2px 3px 3px' : '0 2px 0 3px')};
  border-top: ${p => (p.$first ? 0 : 1)}px solid #8a8a8a;
  border-right: 1px solid #8a8a8a;
  background: linear-gradient(#e8e8e8, #b8b8b8);
  font: 12px/13px ${UI};
  color: #222;
  & > h2 { flex: 1; margin: 0 0 0 4px; font: inherit; }
  & > h2 + button { margin-right: 3px; }
`;
const PanelBody = styled.div<{ $pad: string }>`
  flex: 1;
  min-height: 0;
  display: flex;
  flex-direction: column;
  padding: ${p => p.$pad};
`;

function Head({ title, first }: { title: string; first?: boolean }) {
  return (
    <PanelHead $first={first}>
      <TwoDots $vertical />
      <h2>{title}</h2>
      <TinyButton aria-label={`Pin ${title}`}><PinUp /></TinyButton>
      <TinyButton aria-label={`Collapse ${title}`}><Tri d="M1 6h7L4.500 2z" /></TinyButton>
      <TinyButton aria-label={`Close ${title}`}><Close /></TinyButton>
    </PanelHead>
  );
}

const Row = styled.div<{ $indent?: number; $after?: number }>`
  height: 22px;
  flex: none;
  display: flex;
  align-items: center;
  padding-left: ${p => p.$indent ?? 0}px;
  margin-bottom: ${p => p.$after ?? 0}px;
`;
const Caption = styled.label<{ $w?: number; $off?: boolean }>`
  ${p => p.$w && `width: ${p.$w}px;`}
  flex: none;
  white-space: nowrap;
  color: ${p => (p.$off ? '#808080' : '#000')};
`;
const Picker = styled.span<{ $w: number; $flat?: boolean; $off?: boolean; $gap?: number }>`
  position: relative;
  display: flex;
  align-items: center;
  flex: none;
  width: ${p => p.$w}px;
  height: ${p => (p.$flat ? 22 : 20)}px;
  margin-right: ${p => p.$gap ?? 4}px;
  padding-left: 4px;
  color: ${p => (p.$off ? '#8a8a8a' : '#000')};
  border: 1px solid ${p => (p.$off ? '#adadad' : '#707070')};
  border-radius: 3px;
  background: ${p => (p.$off ? '#f2f2f2' : 'linear-gradient(#f4f4f4, #ebebeb 50%, #dcdcdc 51%, #cfcfcf)')};
  ${p => p.$flat && css`
    border: 0;
    border-top: 1px solid #a0a0a0;
    border-radius: 0;
    background: #fff;
  `}
  &::after {
    content: '';
    position: absolute;
    right: 5px;
    top: 8px;
    border: 4px solid transparent;
    border-top-color: ${p => (p.$off ? '#a0a0a0' : '#000')};
    border-bottom: 0;
    pointer-events: none;
  }
  & > select, & > input { appearance: none; flex: 1; min-width: 0; outline: 0; opacity: 1; }
`;
const WidthPicker = styled(Picker)`
  padding: 2px 19px 2px 2px;
  & > input { height: 16px; padding-left: 1px; background: #f0f0f0; }
`;
const Chip = styled.i`
  width: 11px;
  height: 14px;
  margin-right: 6px;
  border: 1px solid #000;
  background: #00dc00;
`;
const Check = styled.input.attrs({ type: 'checkbox' })`
  appearance: none;
  position: relative;
  flex: none;
  width: 13px;
  height: 13px;
  border: 1px solid #8e8f8f;
  background: linear-gradient(135deg, #cfcfd2, #f6f6f6 70%);
  box-shadow: inset 0 0 0 1px #f4f4f4;
  &:disabled { border-color: #b8b8b8; background: #f6f6f6; }
  &:checked::before {
    content: '';
    position: absolute;
    left: 4px;
    top: 0;
    width: 4px;
    height: 8px;
    border: solid #3c4c8c;
    border-width: 0 2px 2px 0;
    transform: rotate(40deg);
  }
  &:disabled:checked::before { border-color: #b0b0b0; }
`;
const ColorCheck = styled.input.attrs({ type: 'checkbox' })<{ $c: string }>`
  appearance: none;
  flex: none;
  width: 12px;
  height: 12px;
  border: 1px solid #777;
  background: ${p => p.$c};
  box-shadow: inset 1px 1px 0 ${p => (p.$c === '#000' ? '#eee' : '#999')}, inset -1px -1px 0 ${p => (p.$c === '#000' ? '#999' : '#eee')}, inset 2px 2px 0 ${p => (p.$c === '#000' ? '#eee' : '#999')};
`;
const SmallIcon = styled.svg`
  width: 14px;
  height: 14px;
  margin-right: 7px;
  background: #c4c4c4;
`;
const Lead = styled.span`
  display: flex;
  align-items: center;
  width: 21px;
  padding-left: 1px;
  flex: none;
`;

function Pick({ label, value, w, off, gap }: { label: string; value: string; w: number; off?: boolean; gap?: number }) {
  return (
    <Picker $w={w} $off={off} $gap={gap}>
      <select aria-label={label} disabled={off} defaultValue={value}><option>{value}</option></select>
    </Picker>
  );
}
const TickLabel = styled(Caption)`
  margin-left: 3px;
`;
const Tick = ({ id, label, on, off }: { id: string; label: string; on?: boolean; off?: boolean }) => (
  <>
    <Check id={id} defaultChecked={on} disabled={off} />
    <TickLabel htmlFor={id} $off={off}>{label}</TickLabel>
  </>
);

function OptionsPanel() {
  return (
    <Panel>
      <Head title="Options" first />
      <PanelBody $pad="15px 8px 0">
        {['Act', 'Alt'].map(n => (
          <Row key={n}>
            <Lead><ColorCheck $c="#00dc00" aria-label={`${n} colour`} /></Lead>
            <Picker $w={122} $flat>
              <Chip />
              <select aria-label={`${n} layer`}><option>Top</option></select>
            </Picker>
            {n === 'Act' ? <span>Act</span> : <Pick label="Alternate" value="Alt" w={45} />}
          </Row>
        ))}
        <Row>
          <SmallIcon viewBox="0 0 14 14"><circle cx="4" cy="7" r="2.500" fill="#808080" /><circle cx="10" cy="6" r="2.500" fill="#808080" /><path d="M2 3v3M11 8l-3 5M0 12h5" stroke="#808080" /></SmallIcon>
          <Pick label="Via type" value="< VIA >" w={122} />
          <span>Via</span>
        </Row>
        <Row $after={9}>
          <SmallIcon viewBox="0 0 14 14"><path d="M0 7h4l4-4h6" fill="none" stroke="#777" strokeWidth="2" /><path d="M0 11h4l4-4h6" fill="none" stroke="#000" strokeWidth="2" /></SmallIcon>
          <Caption as="span" $w={49}>Net:</Caption>
          <span>Lvds_Clkn</span>
        </Row>
        <Row>
          <Caption $w={63}>Line lock:</Caption>
          <Pick label="Line lock" value="Line" w={59} />
          <Pick label="Angle" value="45" w={59} />
        </Row>
        <Row>
          <Caption $w={63}>Miter:</Caption>
          <Picker $w={60} $flat $gap={3}><input aria-label="Miter" defaultValue="1x width" /></Picker>
          <Pick label="Miter mode" value="Min" w={59} />
        </Row>
        <Row>
          <Caption $w={63} htmlFor="lw">Line width:</Caption>
          <WidthPicker $w={124} $flat><input id="lw" defaultValue="13.00" /></WidthPicker>
        </Row>
        <Row>
          <Caption $w={63}>Bubble:</Caption>
          <Pick label="Bubble" value="Off" w={122} />
        </Row>
        <Row $indent={28}>
          <Caption $w={63}>Shove vias:</Caption>
          <Pick label="Shove vias" value="Off" w={94} off />
        </Row>
        <Row $indent={28}><Tick id="gridless" label="Gridless" on /></Row>
        <Row $indent={28}><Tick id="clip" label="Clip dangling clines" on off /></Row>
        <Row $indent={28}>
          <Caption $w={63}>Smooth:</Caption>
          <Pick label="Smooth" value="Minimal" w={94} off />
        </Row>
        <Row><Tick id="snap" label="Snap to connect point" on /></Row>
        <Row><Tick id="replace" label="Replace etch" on /></Row>
      </PanelBody>
    </Panel>
  );
}

const FilterBox = styled.fieldset`
  margin: 0 22px 0 0;
  padding: 6px 5px 0;
  min-width: 0;
  height: 260px;
  flex: none;
  border: 1px solid #dcdcdc;
  border-radius: 3px;
  & > legend { padding: 0 2px; }
`;
const PushRow = styled.div`
  display: flex;
  gap: 13px;
  margin-bottom: 4px;
`;
const Push = styled.button<{ $focus?: boolean }>`
  height: 14px;
  padding: 0 6px;
  line-height: 12px;
  border: 1px solid ${p => (p.$focus ? '#2a9fd0' : '#707070')};
  border-radius: 3px;
  background: linear-gradient(#f4f4f4, #d4d4d4);
  ${p => p.$focus && 'box-shadow: inset 0 0 0 1px #7fd4f4; background: #e0f0f8;'}
`;
const TwoCol = styled.div`
  display: grid;
  grid-template-columns: 84px 1fr;
`;
const filters: [string, number][] = [
  ['Groups', 0], ['Shapes', 1], ['Comps', 0], ['Voids/Cavities', 0], ['Symbols', 0], ['Cline Segs', 2],
  ['Functions', 0], ['Other Segs', 0], ['Nets', 0], ['Figures', 0], ['Pins', 2], ['DRC errors', 0],
  ['Vias', 1], ['Text', 0], ['Clines', 0], ['Ratsnests', 1],
];

function FindPanel() {
  return (
    <Panel $h={234}>
      <Head title="Find" />
      <PanelBody $pad="8px 3px 0 9px">
        <FilterBox>
          <legend>Design Object Find Filter</legend>
          <PushRow><Push>All On</Push><Push $focus>All Off</Push></PushRow>
          <TwoCol>
            {filters.map(([name, state]) => (
              <Row key={name}><Tick id={`f-${name}`} label={name} on={state === 2} off={state === 0} /></Row>
            ))}
          </TwoCol>
        </FilterBox>
      </PanelBody>
    </Panel>
  );
}

const LayerTable = styled.table`
  border-collapse: collapse;
  table-layout: fixed;
  width: 182px;
  th, td { height: 22px; padding: 0; font-weight: 400; text-align: left; white-space: nowrap; }
  col { width: 21px; }
  col:first-child { width: 77px; }
  thead th { text-decoration: underline; }
  input { display: block; }
`;
const Spread = styled.span`
  display: flex;
  align-items: center;
  gap: 8px;
`;
const HeadCell = styled.span<{ $back?: number }>`
  margin-left: -${p => p.$back ?? 0}px;
`;
const ListBox = styled.div`
  flex: 1;
  min-height: 0;
  display: flex;
  justify-content: space-between;
  margin-top: 3px;
  padding: 3px 0 0 1px;
  overflow: hidden;
  border-top: 1px solid #777;
  border-left: 1px solid #777;
`;
const Cols = () => <colgroup><col /><col /><col /><col /><col /><col /></colgroup>;
const kinds = ['Etch', 'Via', 'Pin', 'Drc', 'All'];

function VisibilityPanel() {
  return (
    <Panel $h={226}>
      <Head title="Visibility" />
      <PanelBody $pad="14px 0 0 1px">
        <Row>
          <Caption $w={42}>Views:</Caption>
          <Pick label="Views" value="" w={150} />
        </Row>
        <LayerTable>
          <Cols />
          <thead>
            <tr><th>Layer</th>{kinds.map((k, i) => <th key={k}><HeadCell $back={i === 0 ? 7 : 0}>{k}</HeadCell></th>)}</tr>
          </thead>
          <tbody>
            <tr><td>Conductors</td>{kinds.map(k => <td key={k}><Check aria-label={`Conductors ${k}`} /></td>)}</tr>
            <tr>
              <td><Spread>Planes <Check aria-label="Planes" defaultChecked /></Spread></td>
              {kinds.map(k => <td key={k}><Check aria-label={`Planes ${k}`} /></td>)}
            </tr>
          </tbody>
        </LayerTable>
        <ListBox>
          <LayerTable>
            <Cols />
            <tbody>
              {['Top', 'Gnd', 'Sig1', 'Vdd', 'Bottom'].map((l, r) => (
                <tr key={l}>
                  <td>{l}</td>
                  {kinds.map((k, c) => (
                    <td key={k}>
                      {c === 4 ? <Check aria-label={`${l} ${k}`} /> : <ColorCheck aria-label={`${l} ${k}`} $c={r === 0 && c < 3 ? '#00dc00' : '#000'} />}
                    </td>
                  ))}
                </tr>
              ))}
            </tbody>
          </LayerTable>
          <Scroll $h={97}>
            <TinyButton aria-label="Scroll up" $h={15}><Tri d="M1 6h7L4.500 2z" /></TinyButton>
            <Thumb $h={37}><Ridges /></Thumb>
            <TinyButton aria-label="Scroll down"><Tri d="M1 3h7L4.500 7z" /></TinyButton>
          </Scroll>
        </ListBox>
      </PanelBody>
    </Panel>
  );
}

/* ---------- status bar ---------- */

const Status = styled.footer`
  height: 17px;
  flex: none;
  display: flex;
  gap: 2px;
`;
const Cell = styled.span<{ $w?: number; $bg?: string; $left?: boolean }>`
  ${p => (p.$w ? `width: ${p.$w}px; flex: none;` : 'flex: 1;')}
  padding: ${p => (p.$left ? '0 2px' : 0)};
  text-align: ${p => (p.$left ? 'left' : 'center')};
  line-height: 15px;
  white-space: nowrap;
  background: ${p => p.$bg ?? 'transparent'};
  border-top: 2px solid #777;
  border-left: 1px solid #777;
`;
const KeyCell = styled.button`
  width: 15px;
  flex: none;
  line-height: 15px;
  border-top: 1px solid #999;
  border-right: 2px solid #555;
  border-bottom: 2px solid #555;
`;

const menus = ['_File', '_Edit', '_View', '_Add', '_Display', 'Set_up', '_Shape', '_Logic', '_Place', 'FlowPla_n', '_Route', 'Analy_ze', '_Manufacture', '_Tools', '_Help'];

export default function App() {
  return (
    <Shell>
      <Global />
      <HiddenDefs aria-hidden>
        <defs>
          <linearGradient id="steel" x1="0" y1="0" x2="0" y2="1"><stop offset="0" stopColor="#c2ceec" /><stop offset="1" stopColor="#7488c0" /></linearGradient>
          <linearGradient id="sand" x1="0" y1="0" x2="0" y2="1"><stop offset="0" stopColor="#fdf0c8" /><stop offset="1" stopColor="#efc878" /></linearGradient>
        </defs>
      </HiddenDefs>
      <TitleEdge />
      <MenuBar>
        {menus.map(m => {
          const [a, b] = m.split('_');
          return <MenuItem key={m}>{a}<u>{b[0]}</u>{b.slice(1)}</MenuItem>;
        })}
        <Brand>cadence</Brand>
      </MenuBar>
      <ToolRow $h={34}>
        <Tools names="new open save" gap={4} />
        <Tools names="move copy del undo down redo downOff ball pin" />
        <Tools names="gridRed gridGreen magWin magFit magIn magOut magPrev magSel refresh three flip" />
        <Tools names="gridStar four fourMove layers cm dfa globe" />
        <Tools names="info tableInfo ruler brush sun moon glass noPick" />
      </ToolRow>
      <ToolRow $h={35}>
        <Tools names="b1 b2 b3 b4 b5 b6" />
        <Tools names="poly rect oval pick nest pie hollow circ diag delShape" gap={4} />
        <Tools names="icRing dimTo dim" gap={1} />
        <Tools names="odb drillTable drillWrench camera r1r2 drillList matrix tp nine" gap={1} />
        <Tools names="net" gap={1} />
        <Tools names="w1 w2 w3 w4 w5" gap={1} />
        <Tools names="windows bow help" />
      </ToolRow>
      <Main>
        <SideTools>
          <Tools vertical names="place u1 conn" gap={11} />
          <Tools vertical names="route slide tune vertex smooth fan meander" gap={1} />
          <Tools vertical names="line rect abcAdd abcEdit" gap={1} />
          <Tools vertical names="rats1 rats2 rats3 rats4 rats5 rats6 rats7 rats8 rats9" />
        </SideTools>
        <Center>
          <Workspace>
            <Board2D />
            <ContextMenu />
          </Workspace>
          <Docks>
            <Dock>
              <StripBar title="Commai" />
              <Log
                aria-label="Command log"
                defaultValue={'No element found.\nPick first element.\nlast pick:  490.00  -220.00\nlast pick:  491.92  -217.59\nlast pick:  491.92  -217.59\nCommand >'}
              />
              <Scroll $h={82}>
                <TinyButton aria-label="Scroll log up" $h={17}><Tri d="M1 6h7L4.500 2z" /></TinyButton>
                <Thumb $h={15} $push />
                <TinyButton aria-label="Scroll log down" $h={17}><Tri d="M1 3h7L4.500 7z" /></TinyButton>
              </Scroll>
            </Dock>
            <Dock $w={329}>
              <StripBar title="WorldVi" />
              <WorldView>
                <rect x="2.500" y="2.500" width="119" height="76" fill="none" stroke="#b8b8b8" />
                <path d="M60 40v3M60 40h2v1M63 42h3M67 41h4M67 43h4" stroke="#ddd" fill="none" />
              </WorldView>
            </Dock>
          </Docks>
        </Center>
        <Panels>
          <OptionsPanel />
          <FindPanel />
          <VisibilityPanel />
        </Panels>
      </Main>
      <Status>
        <Cell $left>add connect</Cell>
        <Cell $w={52} $bg="#00ff00" />
        <Cell $w={131}>LVDS_CLKN</Cell>
        <Cell $w={122}>Top</Cell>
        <Cell $w={131}>525.00, -215.00</Cell>
        <KeyCell>P</KeyCell>
        <KeyCell>A</KeyCell>
        <Cell $w={102} />
        <Cell $w={41} />
        <Cell $w={122}>Etch edit</Cell>
        <Cell $w={70}>Off</Cell>
        <Cell $w={52} $bg="#ffff00">DRC</Cell>
        <Cell $w={41}>0</Cell>
      </Status>
    </Shell>
  );
}
